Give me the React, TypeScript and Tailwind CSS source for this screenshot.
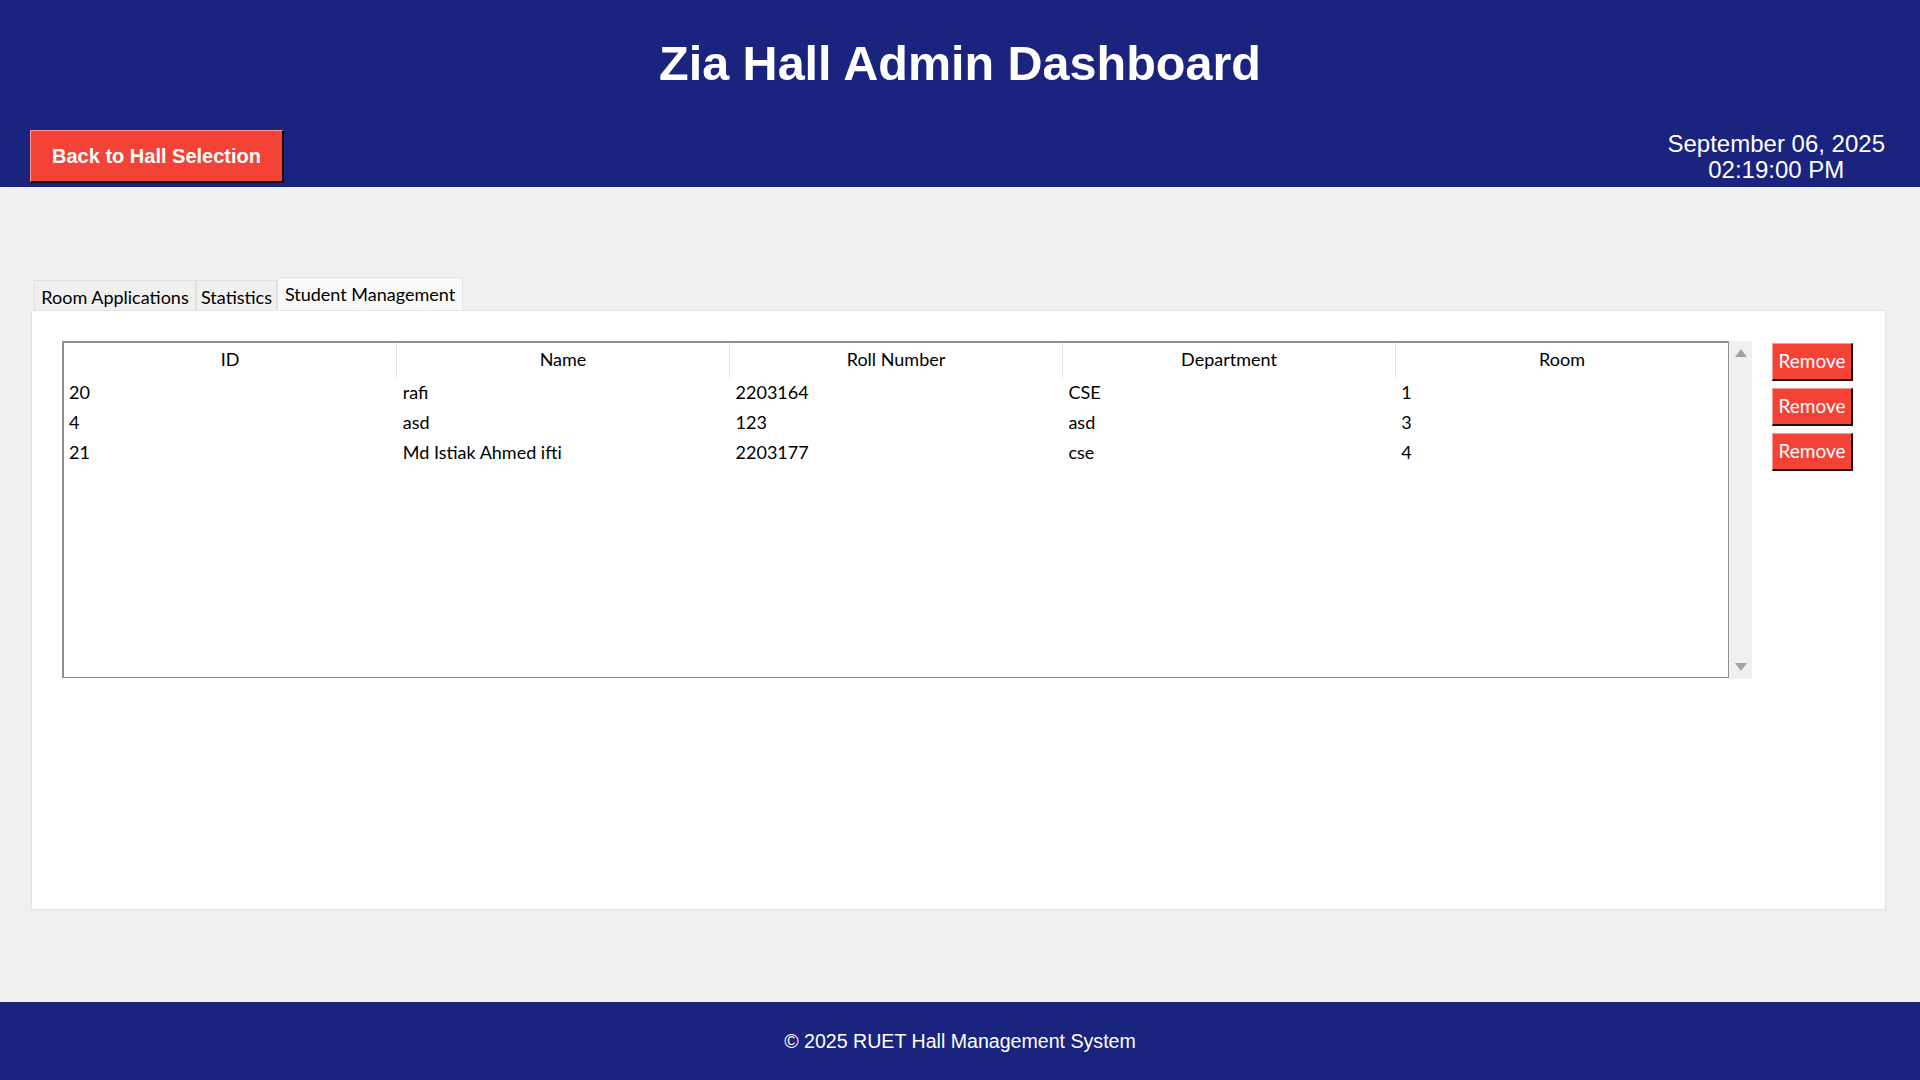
const students = [
  { id: '20', name: 'rafi', roll: '2203164', dept: 'CSE', room: '1' },
  { id: '4', name: 'asd', roll: '123', dept: 'asd', room: '3' },
  { id: '21', name: 'Md Istiak Ahmed ifti', roll: '2203177', dept: 'cse', room: '4' },
]

const columns = ['ID', 'Name', 'Roll Number', 'Department', 'Room']

const ui = "font-['Segoe_UI',Lato,sans-serif]"

function Tab({ label, width, active }: { label: string; width: string; active?: boolean }) {
  return (
    <div
      className={
        active
          ? `${width} h-[33px] pt-[3px] flex justify-center items-start bg-[#f9f9f9] border border-b-0 border-[#e3e3e3] text-[18px] text-black whitespace-nowrap`
          : `${width} h-[30px] pt-[3px] flex justify-center items-start bg-[#f0f0f0] border border-b-0 border-[#e0e0e0] text-[18px] text-black whitespace-nowrap`
      }
    >
      {label}
    </div>
  )
}

function RemoveButton() {
  return (
    <button className="w-[81px] h-[38px] pb-[2px] bg-[#f44336] text-white text-[19px] border-t border-l border-[#ff9a90] border-r-2 border-b-2 border-r-[#1a0a0a] border-b-[#1a0a0a] leading-none">
      Remove
    </button>
  )
}

export default function App() {
  return (
    <div className="h-[1080px] w-[1920px] flex flex-col bg-[#f0f0f0]">
      {/* header */}
      <header className="h-[187px] bg-[#1a237e] text-white flex flex-col">
        <h1 className="pt-[39px] text-center text-[48.5px] leading-none font-bold font-['Liberation_Sans',Arial,sans-serif]">
          Zia Hall Admin Dashboard
        </h1>
        <div className="mt-[42px] flex justify-between items-start pl-[30px] pr-[35px]">
          <button className="w-[254px] h-[53px] bg-[#f44336] border-t border-l border-[#ff9a90] border-r-2 border-b-2 border-r-[#120606] border-b-[#120606] flex items-center justify-center text-[20px] font-bold font-['Liberation_Sans',Arial,sans-serif] whitespace-nowrap">
            Back to Hall Selection
          </button>
          <div className="mt-[1px] text-center text-[24px] leading-[26px] font-['Liberation_Sans',Arial,sans-serif]">
            <div>September 06, 2025</div>
            <div>02:19:00 PM</div>
          </div>
        </div>
      </header>

      {/* main */}
      <main className={`flex-1 px-[31px] pt-[90px] ${ui}`}>
        <div className="flex items-end h-[33px] pl-[3px]">
          <Tab label="Room Applications" width="w-[162px]" />
          <Tab label="Statistics" width="w-[81px]" />
          <Tab label="Student Management" width="w-[186px]" active />
        </div>
        <div className="h-[600px] w-[1855px] bg-white border border-[#e3e3e3] pl-[30px] pt-[30px] flex items-start">
          <div className="w-[1667px] h-[337px] bg-white border border-[#8c9199] border-l-2 border-t-2 flex flex-col text-[18px] text-black">
            <div className="h-[36px] flex">
              {columns.map((c, i) => (
                <div
                  key={c}
                  className={
                    i < columns.length - 1
                      ? 'flex-1 flex items-center justify-center pb-[4px] border-r border-[#e5e5e5]'
                      : 'flex-1 flex items-center justify-center pb-[4px]'
                  }
                >
                  {c}
                </div>
              ))}
            </div>
            {students.map((s) => (
              <div key={s.id} className="h-[30px] flex items-center pb-[4px]">
                <div className="flex-1 pl-[5px]">{s.id}</div>
                <div className="flex-1 pl-[7px]">{s.name}</div>
                <div className="flex-1 pl-[6px]">{s.roll}</div>
                <div className="flex-1 pl-[6px]">{s.dept}</div>
                <div className="flex-1 pl-[6px]">{s.room}</div>
              </div>
            ))}
          </div>
          <div className="w-[23px] h-[338px] bg-[#f0f0f0] flex flex-col items-center justify-between py-[8px]">
            <svg width="12" height="8" viewBox="0 0 12 8">
              <path d="M6 0L12 8H0Z" fill="#a3a3a3" />
            </svg>
            <svg width="12" height="8" viewBox="0 0 12 8">
              <path d="M0 0H12L6 8Z" fill="#a3a3a3" />
            </svg>
          </div>
          <div className="ml-[20px] mt-[2px] flex flex-col gap-[7px]">
            <RemoveButton />
            <RemoveButton />
            <RemoveButton />
          </div>
        </div>
      </main>

      {/* footer */}
      <footer className="h-[78px] pt-[2px] bg-[#1a237e] text-white flex items-center justify-center text-[19.6px] font-['Liberation_Sans',Arial,sans-serif]">
        © 2025 RUET Hall Management System
      </footer>
    </div>
  )
}
